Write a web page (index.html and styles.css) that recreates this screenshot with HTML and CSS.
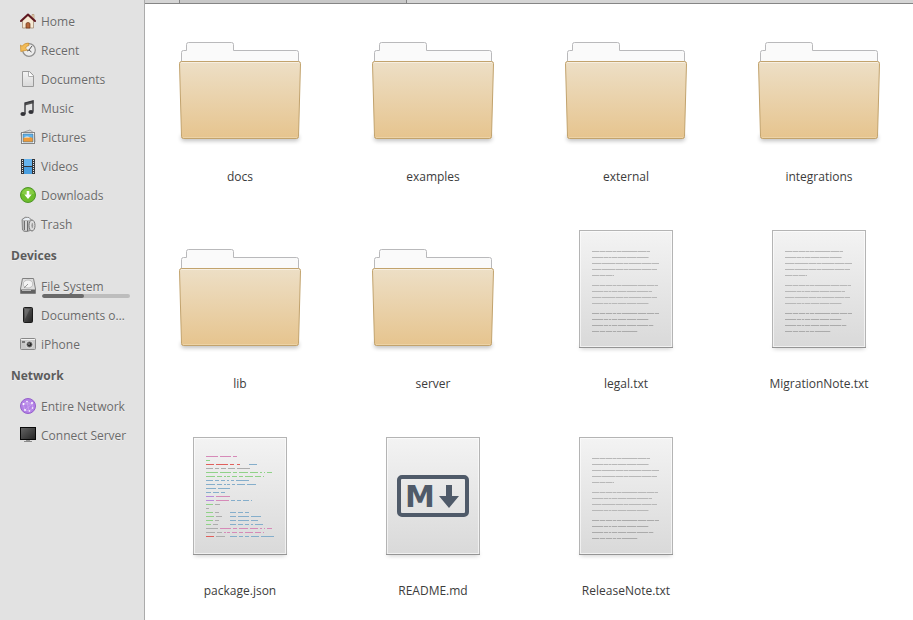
FILE: index.html
```html
<!DOCTYPE html>
<html lang="en">
<head>
  <meta charset="UTF-8">
  <meta name="viewport" content="width=device-width, initial-scale=1.0">
  <title>Files</title>
  <link rel="stylesheet" href="styles.css">
</head>

<body>

<!-- Shared icons and gradients -->
<svg class="defs" width="0" height="0" aria-hidden="true">
  <defs>
    <linearGradient id="tan" x1="0" y1="0" x2="0" y2="1">
      <stop offset="0" stop-color="#eddfc6"/>
      <stop offset="1" stop-color="#e6c48e"/>
    </linearGradient>
    <linearGradient id="sheet" x1="0" y1="0" x2="0" y2="1">
      <stop offset="0" stop-color="#f3f3f3"/>
      <stop offset="1" stop-color="#d9d9d9"/>
    </linearGradient>
    <linearGradient id="tab" x1="0" y1="0" x2="0" y2="1">
      <stop offset="0" stop-color="#fafafa"/>
      <stop offset="0.8" stop-color="#fafafa"/>
      <stop offset="1" stop-color="#e2e2e2"/>
    </linearGradient>
    <linearGradient id="dark" x1="0" y1="0" x2="1" y2="1">
      <stop offset="0" stop-color="#666"/>
      <stop offset="1" stop-color="#222"/>
    </linearGradient>
    <filter id="soft" x="-20%" y="-200%" width="140%" height="500%">
      <feGaussianBlur stdDeviation="2"/>
    </filter>
    <symbol id="folder" viewBox="0 0 128 128">
      <rect x="5" y="116" width="118" height="6" rx="3" fill="#000" opacity="0.25" filter="url(#soft)"/>
      <path d="M5.500 46V33.500q0-2 2-2H10.500V25.500q0-2 2-2H55.500q2 0 2 2V31.500H120.500q2 0 2 2V46z" fill="url(#tab)" stroke="#b9b9bb"/>
      <path d="M3.500 44.500q0-2 2-2H122.500q2 0 2 2L122.500 117.500q0 2-2 2H7.500q-2 0-2-2z" fill="url(#tan)" stroke="#c2a36d"/>
      <path d="M5 43.500H123" stroke="#f7efe1" fill="none"/>
      <path d="M7 118.500H121" stroke="#ecd2a5" fill="none"/>
    </symbol>
    <symbol id="page" viewBox="0 0 128 128">
      <rect x="18" y="119" width="92" height="4" rx="2" fill="#000" opacity="0.2" filter="url(#soft)"/>
      <rect x="17.500" y="4.500" width="93" height="117" fill="url(#sheet)" stroke="#b4b4b4"/>
      <rect x="18.500" y="5.500" width="91" height="115" fill="none" stroke="#fff" stroke-opacity="0.6"/>
      <path d="M17 121.500H111" stroke="#949494"/>
    </symbol>
    <symbol id="text-file" viewBox="0 0 128 128">
      <use href="#page"/>
      <!-- solid pale line with darker words on top -->
      <path stroke="#cfcfcf" d="M30 25.500H88M30 31.500H87M30 37.500H97M30 43.500H95M30 49.500H52M30 59.500H96M30 65.500H90M30 71.500H95M30 77.500H87M30 87.500H97M30 93.500H87M30 99.500H92M30 105.500H76"/>
      <g stroke="#b8b8b8">
        <path stroke-dasharray="7 1 5 1 6 1 3 1 4 1 15 1 8 1" d="M30 25.500H88M30 49.500H52M30 59.500H96"/>
        <path stroke-dasharray="11 1 4 1 2 1 5 1 8 1 9 1" d="M30 31.500H87M30 65.500H90M30 77.500H87"/>
        <path stroke-dasharray="9 1 13 1 7 1 4 1 12 1" d="M30 37.500H97M30 43.500H95M30 71.500H95"/>
        <path stroke="#ababab" stroke-dasharray="7 1 5 1 6 1 3 1 4 1 15 1 8 1" d="M30 87.500H97M30 105.500H76"/>
        <path stroke="#ababab" stroke-dasharray="11 1 4 1 2 1 5 1 8 1 9 1" d="M30 93.500H87M30 99.500H92"/>
      </g>
    </symbol>
  </defs>
</svg>

<div class="window">

  <!-- Places -->
  <nav class="sidebar">
    <ul class="places">
      <li><a class="place" href="#home">
        <svg class="icon" viewBox="0 0 16 16">
          <path d="M12 1.500h2v5h-2z" fill="#e8d3b4" stroke="#a98a68" stroke-width="0.600"/>
          <path d="M2.500 7.500 8 2.500l5.500 5V15h-11z" fill="#f6e9d4" stroke="#a38a72" stroke-width="0.800"/>
          <path d="M1 8 8 1.500 15 8" fill="none" stroke="#5f1720" stroke-width="2" stroke-linejoin="round" stroke-linecap="round"/>
          <path d="M6 15v-4q0-1.500 2-1.500t2 1.500v4z" fill="#b5683c" stroke="#6e3518" stroke-width="0.700"/>
        </svg>
        <span class="name">Home</span></a></li>
      <li><a class="place" href="#recent">
        <svg class="icon" viewBox="0 0 16 16">
          <circle cx="9" cy="8" r="6.300" fill="#ececec" stroke="#8f8f8f" stroke-width="1.200"/>
          <path d="m9 8 3-4M9 8l2.500 2M9 8l-2 1" stroke="#555" fill="none"/>
          <path d="M.5 3 2 4.200Q4.500 1 8.500 1L9 3.500Q6.500 3.500 5.500 6.200L7.500 8 .8 9.500z" fill="#f3bc57" stroke="#c58a2c" stroke-width="0.700"/>
        </svg>
        <span class="name">Recent</span></a></li>
      <li><a class="place" href="#documents">
        <svg class="icon" viewBox="0 0 16 16">
          <path d="M2.500.5h7l4 4v11h-11z" fill="url(#sheet)" stroke="#9a9a9a"/>
          <path d="M8.500 1v4.500H13" fill="#fff" stroke="#b0b0b0"/>
        </svg>
        <span class="name">Documents</span></a></li>
      <li><a class="place" href="#music">
        <svg class="icon" viewBox="0 0 16 16">
          <path d="M5 3 13.500.5v2.700L5 5.500z" fill="#555"/>
          <path d="M5 14V3l8-2v10.500" fill="none" stroke="#3b3b3f" stroke-width="1.400"/>
          <ellipse cx="3" cy="14" rx="2.600" ry="1.900" fill="#333338"/>
          <ellipse cx="11" cy="12" rx="2.600" ry="1.900" fill="#333338"/>
        </svg>
        <span class="name">Music</span></a></li>
      <li><a class="place" href="#pictures">
        <svg class="icon" viewBox="0 0 16 16">
          <path d="m1 4 9-3 4.500 3.500L15 13H2z" fill="#d9d9d9" stroke="#888" stroke-width="0.700"/>
          <rect x="1.500" y="3.500" width="13" height="11" fill="#fbfbfb" stroke="#858585"/>
          <path d="M3 5h10v4H3z" fill="#62b3ea"/>
          <path d="M3 9q5-2 10 0v4H3z" fill="#ed9b3a"/>
          <path d="M4 8.500q3-2 6 0z" fill="#fff"/>
          <path d="M3 5h10v8H3z" fill="none" stroke="#416f91" stroke-width="0.600"/>
        </svg>
        <span class="name">Pictures</span></a></li>
      <li><a class="place" href="#videos">
        <svg class="icon" viewBox="0 0 16 16">
          <path d="M1 1h14v15H1z" fill="#34363a"/>
          <path d="M4 1h8v7H4z" fill="#66b4ee"/>
          <path d="M4 9h8v7H4z" fill="#4a9fe0"/>
          <path d="M2.500 2v13M13.500 2v13" stroke="#e6e6e6" stroke-dasharray="1 1"/>
        </svg>
        <span class="name">Videos</span></a></li>
      <li><a class="place" href="#downloads">
        <svg class="icon" viewBox="0 0 16 16">
          <circle cx="8" cy="8" r="7.500" fill="#6dbd2c" stroke="#4f962a"/>
          <path d="M2 7a6 5.500 0 0 1 12 0z" fill="#91d34e" opacity="0.700"/>
          <path d="M6.700 4h2.600v3.500h2.400L8 12 4.300 7.500h2.400z" fill="#fff"/>
        </svg>
        <span class="name">Downloads</span></a></li>
      <li><a class="place" href="#trash">
        <svg class="icon" viewBox="0 0 16 16">
          <path d="M2 3.500Q5 0 9 1.500l3 3V14l-5 1.500Q3.500 16 2.500 14z" fill="#b9b9b9" stroke="#777" stroke-width="0.800"/>
          <path d="M3 3.500q3-2.500 6-1.500l1 2H3z" fill="#e9eff5"/>
          <path d="M4.500 5v9M7.500 5v10" stroke="#6e6e6e"/>
          <path d="M6 5v9.500" stroke="#f2f2f2"/>
          <ellipse cx="12" cy="9.500" rx="3" ry="5.500" fill="#ddd" stroke="#777"/>
          <ellipse cx="12.300" cy="9.500" rx="1.300" ry="3" fill="#999" stroke="#eee" stroke-width="0.600"/>
        </svg>
        <span class="name">Trash</span></a></li>
    </ul>

    <h2 class="heading">Devices</h2>
    <ul class="places">
      <li><a class="place" href="#filesystem">
        <svg class="icon" viewBox="0 0 16 16">
          <path d="M2.500.5h11l2 10.500v4.500H.5V11z" fill="#dedede" stroke="#808080"/>
          <ellipse cx="8" cy="6" rx="4.800" ry="4" fill="#f3f3f3" stroke="#b3b3b3" stroke-width="0.800"/>
          <path d="m8 6-4 4" stroke="#999"/>
          <path d="M1 11.500h14V15H1z" fill="#626262"/>
          <path d="M2 12.500h9" stroke="#bbb"/>
        </svg>
        <span class="name">File System</span>
        <progress class="usage" value="48" max="100" aria-label="Disk space used"></progress></a></li>
      <li><a class="place" href="#documents-on">
        <svg class="icon" viewBox="0 0 16 16">
          <rect x="3.500" y="0.500" width="9" height="15" rx="1" fill="url(#dark)" stroke="#1b1b1b"/>
          <path d="M5 2h5L5 12z" fill="#fff" opacity="0.150"/>
        </svg>
        <span class="name">Documents o…</span></a></li>
      <li><a class="place" href="#iphone">
        <svg class="icon" viewBox="0 0 16 16">
          <rect x="0.500" y="2.500" width="15" height="11" rx="1" fill="#c9c9c9" stroke="#888"/>
          <path d="M1 3.500h14" stroke="#f2f2f2"/>
          <path d="M2 5h3v2H2z" fill="#777"/>
          <circle cx="9.500" cy="8.500" r="3.700" fill="#999" stroke="#eee" stroke-width="0.700"/>
          <circle cx="9.500" cy="8.500" r="2.300" fill="#292929"/>
          <circle cx="9" cy="8" r="0.700" fill="#ccc"/>
        </svg>
        <span class="name">iPhone</span></a></li>
    </ul>

    <h2 class="heading">Network</h2>
    <ul class="places">
      <li><a class="place" href="#network">
        <svg class="icon" viewBox="0 0 16 16">
          <circle cx="8" cy="8" r="7.500" fill="#b381e6" stroke="#9560cb"/>
          <path d="m3 6 4-2 5 2 1 4-4 3-4-1zM7 4l2 9M3 6l9 0M5 12l7-6" fill="none" stroke="#cda9f0" stroke-width="0.700"/>
          <g fill="#fff"><circle cx="3.500" cy="6" r="1"/><circle cx="7" cy="3.500" r="0.800"/><circle cx="12" cy="5" r="1"/><circle cx="5" cy="12" r="0.900"/><circle cx="9.500" cy="13" r="0.800"/><circle cx="12.500" cy="10" r="0.800"/></g>
        </svg>
        <span class="name">Entire Network</span></a></li>
      <li><a class="place" href="#connect">
        <svg class="icon" viewBox="0 0 16 16">
          <path d="M6 13h4v1.500H6z" fill="#999"/>
          <path d="M4 14.500h8" stroke="#8b8b8b"/>
          <rect x="0.500" y="0.500" width="15" height="12" fill="url(#dark)" stroke="#080808"/>
        </svg>
        <span class="name">Connect Server</span></a></li>
    </ul>
  </nav>

  <!-- Folder contents -->
  <main class="content">
    <div class="tabs"><div class="active-tab"></div></div>
    <ul class="files">
      <li><a class="file" href="#docs"><svg class="thumb"><use href="#folder"/></svg><span>docs</span></a></li>
      <li><a class="file" href="#examples"><svg class="thumb"><use href="#folder"/></svg><span>examples</span></a></li>
      <li><a class="file" href="#external"><svg class="thumb"><use href="#folder"/></svg><span>external</span></a></li>
      <li><a class="file" href="#integrations"><svg class="thumb"><use href="#folder"/></svg><span>integrations</span></a></li>
      <li><a class="file" href="#lib"><svg class="thumb"><use href="#folder"/></svg><span>lib</span></a></li>
      <li><a class="file" href="#server"><svg class="thumb"><use href="#folder"/></svg><span>server</span></a></li>
      <li><a class="file" href="#legal"><svg class="thumb"><use href="#text-file"/></svg><span>legal.txt</span></a></li>
      <li><a class="file" href="#migration"><svg class="thumb"><use href="#text-file"/></svg><span>MigrationNote.txt</span></a></li>
      <li><a class="file" href="#package">
        <svg class="thumb" viewBox="0 0 128 128">
          <use href="#page"/>
          <path class="code-pink" d="M30 23.500h12m2 0h11m2 0h4M40 63.500h14M40 67.500h13M44 95.500h11m2 0h4m2 0h9m2 0h8m2 0h2m2 0h1m2 0h5M48 99.500h2m1 0h3m2 0h5m2 0h4m2 0h8m2 0h6m2 0h1"/>
          <path class="code-green" d="M30 27.500h4M30 39.500h12m2 0h11m2 0h4m2 0h9m2 0h8m2 0h2m2 0h1m2 0h5M30 43.500h9m2 0h5m2 0h2m1 0h3m2 0h5m2 0h4m2 0h8m2 0h6m2 0h1M30 71.500h7M30 79.500h7M30 83.500h8M30 87.500h7M30 91.500h5"/>
          <path class="code-red" d="M30 31.500h8m2 0h12m2 0h4m3 0h3M30 103.500h8"/>
          <path class="code-blue" d="M73 31.500h8M30 47.500h7m2 0h4m2 0h4m2 0h2m2 0h3m2 0h13M30 51.500h9m2 0h5m2 0h2m1 0h3m2 0h3m2 0h8m2 0h9M30 55.500h10m2 0h12M30 59.500h5m2 0h6m2 0h4M55 67.500h4m2 0h4m2 0h6m2 0h1M54 79.500h6m2 0h5m2 0h4M54 83.500h6m2 0h11m2 0h10M54 87.500h6m2 0h11m2 0h7M54 91.500h6m2 0h5m2 0h4m2 0h2m2 0h8M54 103.500h7m2 0h4m2 0h4m2 0h8m2 0h13"/>
          <path class="code-gray" d="M30 35.500h7m2 0h4m2 0h5m2 0h7m2 0h13M39 71.500h5M30 75.500h3M39 79.500h4M40 83.500h6M39 87.500h4M37 91.500h5M30 95.500h12M30 99.500h9m2 0h5M40 103.500h9"/>
          <path class="code-purple" d="M30 63.500h8M30 67.500h8"/>
        </svg><span>package.json</span></a></li>
      <li><a class="file" href="#readme">
        <svg class="thumb" viewBox="0 0 128 128">
          <use href="#page"/>
          <rect x="30" y="44" width="68" height="38" rx="3" fill="none" stroke="#4f5a69" stroke-width="4"/>
          <text class="mark" x="51" y="74" text-anchor="middle">M</text>
          <path d="M77 52h6v11h7L80 75 70 63h7z" fill="#4f5a69"/>
        </svg><span>README.md</span></a></li>
      <li><a class="file" href="#release"><svg class="thumb"><use href="#text-file"/></svg><span>ReleaseNote.txt</span></a></li>
    </ul>
  </main>

</div>

</body>
</html>
```
FILE: styles.css
```css
body {
  margin: 0;
  font-family: "Open Sans", "Noto Sans", sans-serif;
  font-size: 12px;
  line-height: 18px;
  color: #3c3c3c;
  background-color: #fff;
}

ul {
  list-style-type: none;
  margin: 0;
  padding: 0;
}

a {
  color: inherit;
  text-decoration: none;
}

.defs {
  position: absolute;
}

.window {
  display: flex;
  min-height: 100vh;
}

/* Sidebar */
.sidebar {
  box-sizing: border-box;
  flex: 0 0 145px;
  padding-top: 7px;
  background-color: #e2e2e2;
  border-right: 1px solid #ababab;
  color: #6a6a6a;
  text-shadow: 0 1px 0 rgba(255, 255, 255, 0.4);
}

.place {
  position: relative;
  display: flex;
  align-items: center;
  gap: 5px;
  height: 29px;
  padding: 0 14px 0 20px;
}

.icon {
  flex: none;
  width: 16px;
  height: 16px;
  margin-bottom: 1px;
}

.name {
  white-space: nowrap;
}

.heading {
  margin: 0;
  padding-left: 11px;
  font-size: 12px;
  line-height: 33px;
  color: #5c5c5c;
}

/* Disk usage bar, drawn over the bottom of the label */
.usage {
  position: absolute;
  left: 42px;
  bottom: 3px;
  width: 88px;
  height: 4px;
  border: none;
  border-radius: 2px;
  overflow: hidden;
  appearance: none;
  background-color: #bdbdbd;
}

.usage::-webkit-progress-bar {
  background-color: #bdbdbd;
}

.usage::-webkit-progress-value {
  background-color: #6a6a6a;
  border-radius: 2px;
}

/* Icon view */
.content {
  flex: 1;
  min-width: 0;
}

.tabs {
  height: 3px;
  padding-left: 34px;
  background-color: #d5d5d5;
  border-bottom: 1px solid #858585;
}

.active-tab {
  box-sizing: border-box;
  width: 228px;
  height: 3px;
  background-color: #c8c8c8;
  border: solid #858585;
  border-width: 0 1px;
}

.files {
  display: grid;
  grid-template-columns: repeat(auto-fill, minmax(144px, 1fr));
  gap: 40px 49px;
  padding: 15px 22px 0 23px;
}

.file {
  display: flex;
  flex-direction: column;
  align-items: center;
  gap: 21px;
}

.thumb {
  width: 128px;
  height: 128px;
}

.mark {
  font-family: "DejaVu Sans", sans-serif;
  font-size: 30px;
  font-weight: bold;
  fill: #4f5a69;
}

/* Source lines on the package.json thumbnail */
.code-pink {
  stroke: #d68ab8;
}

.code-green {
  stroke: #90d288;
}

.code-red {
  stroke: #e0605c;
}

.code-blue {
  stroke: #85aecb;
}

.code-gray {
  stroke: #adadad;
}

.code-purple {
  stroke: #b98adb;
}
```
